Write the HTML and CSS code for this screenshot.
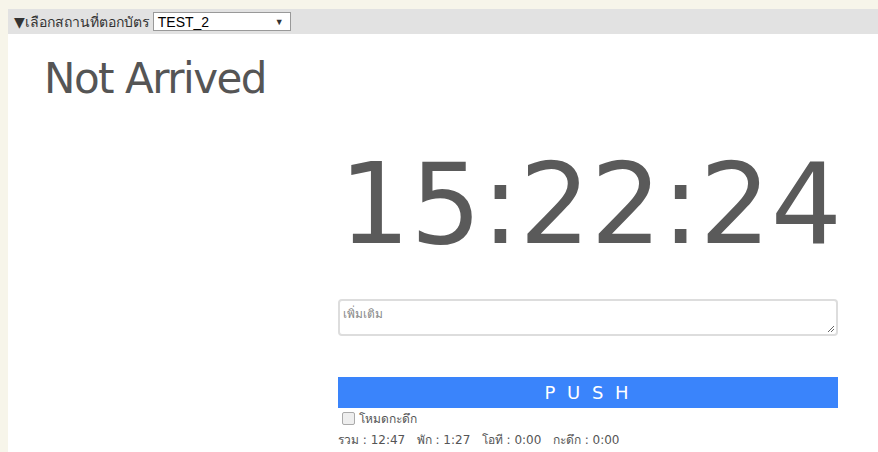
FILE: index.html
```html
<!DOCTYPE html>
<html>
<head>
<meta charset="utf-8">
<link rel="stylesheet" href="styles.css">
</head>
<body>
<div class="page">
  <div class="locbar">
    <span class="loclabel">▼เลือกสถานที่ตอกบัตร</span>
    <div class="select"><span>TEST_2</span><span class="caret">▼</span></div>
  </div>
  <div class="main">
    <h1 class="status">Not Arrived</h1>
    <div class="panel">
      <div class="clock">15:22:24</div>
      <div class="note">
        <span class="placeholder">เพิ่มเติม</span>
        <svg class="grip" width="8" height="8" viewBox="0 0 8 8"><path d="M7 1 L1 7 M7 4 L4 7" stroke="#666" stroke-width="1" fill="none"/></svg>
      </div>
      <div class="push">P U S H</div>
      <label class="night"><span class="box"></span>โหมดกะดึก</label>
      <div class="stats">รวม : 12:47&nbsp;&nbsp;&nbsp;พัก : 1:27&nbsp;&nbsp;&nbsp;โอที : 0:00&nbsp;&nbsp;&nbsp;กะดึก : 0:00</div>
    </div>
  </div>
</div>
</body>
</html>
```
FILE: styles.css
```css
html, body {
  margin: 0;
  padding: 0;
  background: #f7f5ea;
  height: 100%;
  overflow: hidden;
}
body {
  padding: 9px 0 0 8px;
  box-sizing: border-box;
  font-family: "DejaVu Sans", "Noto Sans", sans-serif;
  color: #555;
}
.page {
  background: #fff;
  height: 100%;
}
.locbar {
  background: #e2e2e2;
  height: 25px;
  display: flex;
  align-items: center;
  padding-left: 6px;
  font-size: 14px;
  color: #333;
}
.loclabel {
  margin-right: 3px;
}
.select {
  height: 17px;
  border: 1px solid #999;
  background: #fff;
  display: flex;
  align-items: center;
  justify-content: space-between;
  padding: 0 6px 0 4px;
  font-family: "Liberation Sans", Arial, sans-serif;
  font-size: 14px;
  color: #000;
  width: 126px;
}
.caret {
  font-size: 9px;
  color: #333;
}
.status {
  margin: 0;
  padding: 20px 0 0 36px;
  font-weight: normal;
  font-size: 42px;
  letter-spacing: -1.5px;
  line-height: 50px;
  color: #555;
}
.panel {
  margin-left: 330px;
  width: 500px;
  display: flex;
  flex-direction: column;
}
.clock {
  text-align: right;
  font-size: 112px;
  line-height: 130px;
  margin-top: 35px;
  margin-right: -4px;
  color: #5a5a5a;
}
.note {
  margin-top: 30px;
  height: 29px;
  border: 2px solid #ddd;
  border-radius: 4px;
  position: relative;
  padding: 2px 3px;
}
.placeholder {
  font-size: 12px;
  color: #888;
}
.grip {
  position: absolute;
  right: 1px;
  bottom: 1px;
}
.push {
  margin-top: 41px;
  height: 31px;
  background: #3a84fb;
  color: #fff;
  font-size: 18px;
  display: flex;
  align-items: center;
  justify-content: center;
  letter-spacing: 3px;
}
.night {
  display: flex;
  align-items: center;
  font-size: 12px;
  color: #555;
  height: 20px;
  padding-left: 4px;
  margin-top: 0;
}
.box {
  width: 11px;
  height: 11px;
  border: 1px solid #aaa;
  border-radius: 2px;
  background: #eee;
  margin-right: 4px;
}
.stats {
  font-size: 12px;
  color: #555;
  margin-top: 2px;
}
```
